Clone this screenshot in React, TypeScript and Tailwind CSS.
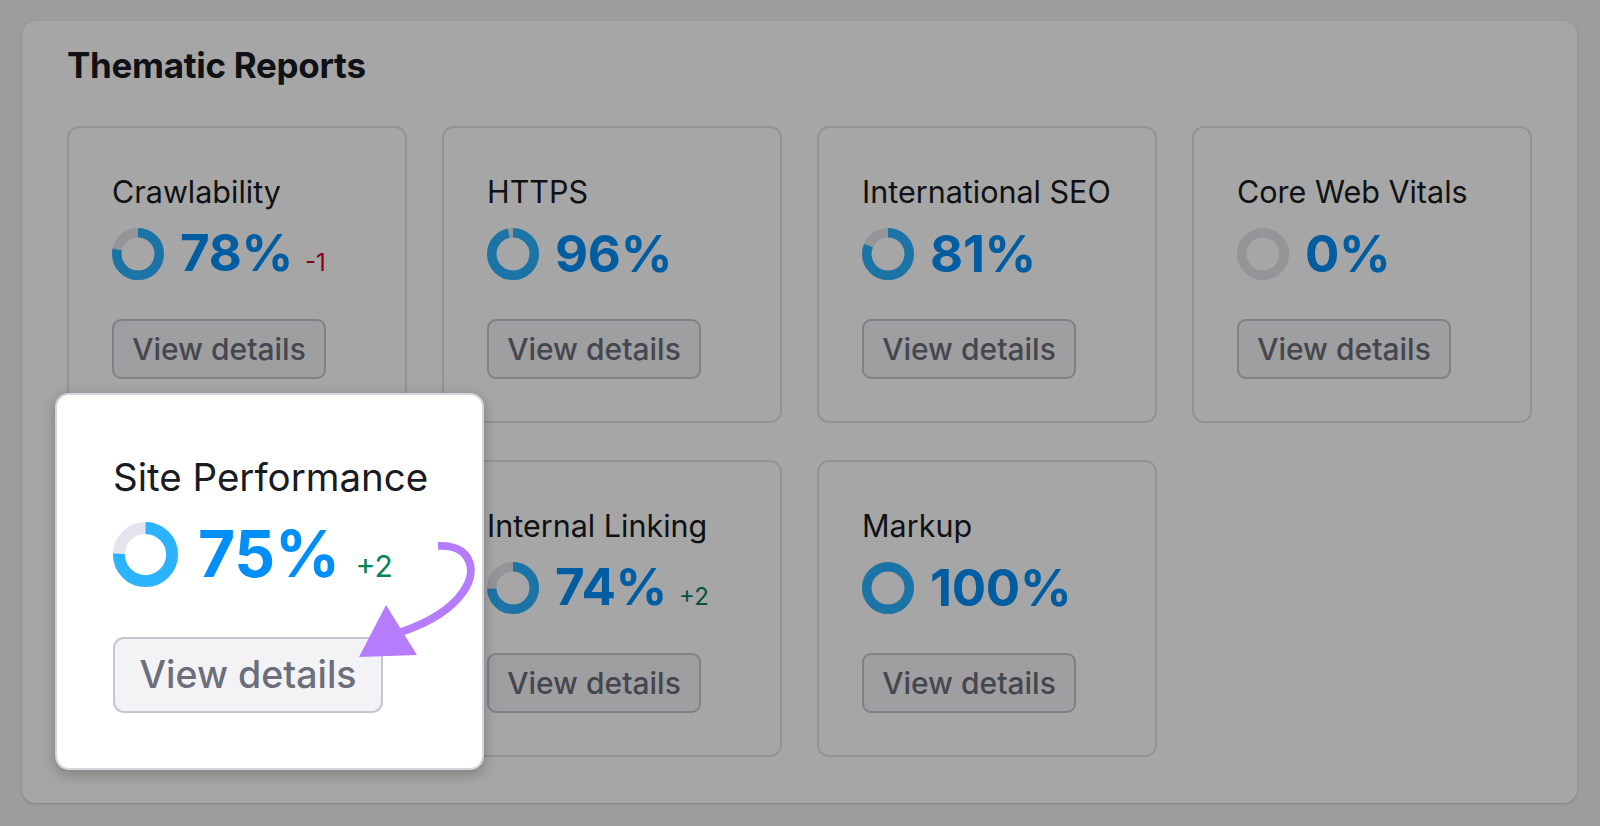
import React from 'react';

type Report = { title: string; pct: number; delta?: string; up?: boolean };

const reports: Report[] = [
  { title: 'Crawlability', pct: 78, delta: '-1', up: false },
  { title: 'HTTPS', pct: 96 },
  { title: 'International SEO', pct: 81 },
  { title: 'Core Web Vitals', pct: 0 },
  { title: 'Site Performance', pct: 75, delta: '+2', up: true },
  { title: 'Internal Linking', pct: 74, delta: '+2', up: true },
  { title: 'Markup', pct: 100 },
];

function Donut({ pct, size }: { pct: number; size: number }) {
  const r = 21.25;
  const c = 2 * Math.PI * r;
  return (
    <svg width={size} height={size} viewBox="0 0 52 52" className="shrink-0">
      <circle cx="26" cy="26" r={r} fill="none" stroke="#e4e4ec" strokeWidth="9.5" />
      {pct > 0 && (
        <circle
          cx="26"
          cy="26"
          r={r}
          fill="none"
          stroke="#2bb3ff"
          strokeWidth="9.5"
          strokeDasharray={`${(c * pct) / 100} ${c}`}
          transform="rotate(-90 26 26)"
        />
      )}
    </svg>
  );
}

function Card({ r }: { r: Report }) {
  return (
    <div className="h-[297px] rounded-[12px] border-2 border-[#e0e1e9] bg-white pl-[43px] pt-[46px]">
      <div className="text-[30.5px] leading-[36px] text-[#191b23]">{r.title}</div>
      <div className="mt-[18px] flex h-[52px] items-center gap-[16px]">
        <Donut pct={r.pct} size={52} />
        <div className="flex items-baseline gap-[12px]">
          <span className="text-[51px] font-bold leading-[52px] tracking-[-0.3px] text-[#008ff8]">{r.pct}%</span>
          {r.delta && (
            <span className={r.up ? 'text-[24px] text-[#00845a]' : 'text-[24px] text-[#d1002f]'}>{r.delta}</span>
          )}
        </div>
      </div>
      <button className="mt-[39px] flex h-[60px] w-[214px] items-center justify-center rounded-[9px] border-2 border-[#c4c7cf] bg-[#f4f4f8] text-[30px] font-medium text-[#6c6e79]">
        View details
      </button>
    </div>
  );
}

function FocusCard() {
  return (
    <div className="absolute left-[55px] top-[393px] h-[377px] w-[429px] rounded-[14px] border-2 border-[#d4d5dd] bg-white pl-[56px] pt-[60px] shadow-[0_4px_14px_rgba(0,0,0,0.25)]">
      <div className="text-[38.5px] leading-[45px] text-[#191b23]">Site Performance</div>
      <div className="mt-[22px] flex h-[65px] items-center gap-[20px]">
        <Donut pct={75} size={65} />
        <div className="flex items-baseline gap-[16px]">
          <span className="text-[64px] font-bold leading-[65px] tracking-[-0.3px] text-[#008ff8]">75%</span>
          <span className="text-[30px] text-[#00845a]">+2</span>
        </div>
      </div>
      <button className="mt-[50px] flex h-[76px] w-[270px] items-center justify-center rounded-[11px] border-2 border-[#c4c7cf] bg-[#f3f3f6] text-[37.5px] font-medium text-[#6c6e79]">
        View details
      </button>
    </div>
  );
}

export default function App() {
  return (
    <div className="relative h-[826px] w-[1600px] overflow-hidden bg-[#f1f1f5] pl-[22px] pt-[21px] font-['Inter',sans-serif]">
      <section className="h-[782px] w-[1555px] rounded-[14px] bg-white px-[45px] pt-[24px] shadow-[0_1px_3px_rgba(0,0,0,0.18)]">
        <h2 className="text-[35px] font-bold leading-[40px] tracking-[-0.3px] text-[#191b23]">Thematic Reports</h2>
        <div className="mt-[41px] grid grid-cols-4 gap-x-[35px] gap-y-[37px]">
          {reports.map((r) => (
            <Card key={r.title} r={r} />
          ))}
        </div>
      </section>

      {/* dim layer */}
      <div className="absolute inset-0 bg-black/35" />

      <FocusCard />

      {/* pointer arrow */}
      <svg className="absolute left-0 top-0" width="1600" height="826" viewBox="0 0 1600 826">
        <path
          d="M438 546 C468 544 480 568 463 592 C449 612 425 624 401 632"
          fill="none"
          stroke="#b57dfd"
          strokeWidth="8"
        />
        <polygon points="359,657 386,605 417,655" fill="#b57dfd" />
      </svg>
    </div>
  );
}
